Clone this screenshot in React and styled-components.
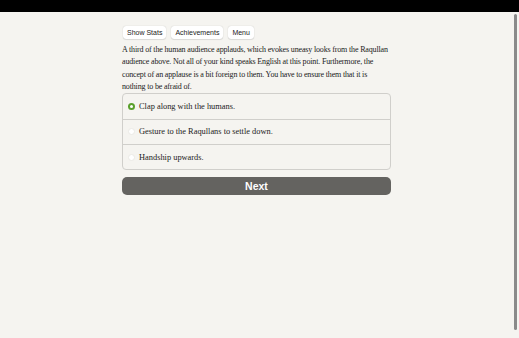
import React, { useState } from "react";
import styled, { createGlobalStyle } from "styled-components";

const Global = createGlobalStyle`
  html, body { margin: 0; padding: 0; height: 100%; overflow: hidden; }
  body { background: #f5f4f0; }
`;

const TopBar = styled.div`
  height: 12px;
  background: #000;
`;

const Page = styled.div`
  position: relative;
  height: 326px;
  padding-right: 6px;
`;

const Column = styled.main`
  width: 269px;
  margin: 0 auto;
  padding-top: 14px;
`;

const Toolbar = styled.nav`
  display: flex;
  gap: 5px;
  margin-left: 1px;
`;

const ToolButton = styled.button`
  font-family: "Liberation Sans", Arial, sans-serif;
  font-size: 7px;
  color: #222;
  background: #fff;
  border: none;
  border-radius: 3px;
  height: 13px;
  padding: 0 4px;
  box-shadow: 0 0 1px rgba(0, 0, 0, 0.25), 0 1px 1px rgba(0, 0, 0, 0.08);
  cursor: pointer;
`;

const Story = styled.p`
  font-family: "Liberation Serif", "Times New Roman", serif;
  font-size: 8px;
  letter-spacing: -0.16px;
  line-height: 12.3px;
  color: #222;
  margin: 5px 0 0 0;
`;

const Choices = styled.div`
  margin-top: 0;
  border: 1px solid #d0cfcb;
  border-radius: 4px;
  overflow: hidden;
`;

const Choice = styled.label`
  display: flex;
  align-items: center;
  gap: 4px;
  height: 24.4px;
  padding-left: 5px;
  border-top: ${(p) => (p.$first ? "none" : "1px solid #d0cfcb")};
  font-family: "Liberation Serif", "Times New Roman", serif;
  font-size: 8.4px;
  color: #222;
  cursor: pointer;
`;

const Radio = styled.span`
  width: 7px;
  height: 7px;
  border-radius: 50%;
  box-sizing: border-box;
  background: #fff;
  border: ${(p) => (p.$on ? "2px solid #5aa02c" : "1px solid #ebeae6")};
  flex: none;
`;

const NextButton = styled.button`
  display: block;
  width: 100%;
  margin-top: 7px;
  height: 18px;
  border: none;
  border-radius: 5px;
  background: #646360;
  color: #fff;
  font-family: "Liberation Sans", Arial, sans-serif;
  font-weight: bold;
  font-size: 10.5px;
  cursor: pointer;
`;

const ScrollThumb = styled.div`
  position: absolute;
  right: 2px;
  top: 2px;
  width: 3px;
  height: 316px;
  background: #8a8a8a;
  border-radius: 2px;
`;

const options = [
  "Clap along with the humans.",
  "Gesture to the Raqullans to settle down.",
  "Handship upwards.",
];

export default function App() {
  const [sel, setSel] = useState(0);
  return (
    <>
      <Global />
      <TopBar />
      <Page>
        <Column>
          <Toolbar>
            <ToolButton>Show Stats</ToolButton>
            <ToolButton>Achievements</ToolButton>
            <ToolButton>Menu</ToolButton>
          </Toolbar>
          <Story>
            A third of the human audience applauds, which evokes uneasy looks from the Raqullan
            audience above. Not all of your kind speaks English at this point. Furthermore, the
            concept of an applause is a bit foreign to them. You have to ensure them that it is
            nothing to be afraid of.
          </Story>
          <Choices>
            {options.map((o, i) => (
              <Choice key={o} $first={i === 0} onClick={() => setSel(i)}>
                <Radio $on={sel === i} />
                {o}
              </Choice>
            ))}
          </Choices>
          <NextButton>Next</NextButton>
        </Column>
        <ScrollThumb />
      </Page>
    </>
  );
}
